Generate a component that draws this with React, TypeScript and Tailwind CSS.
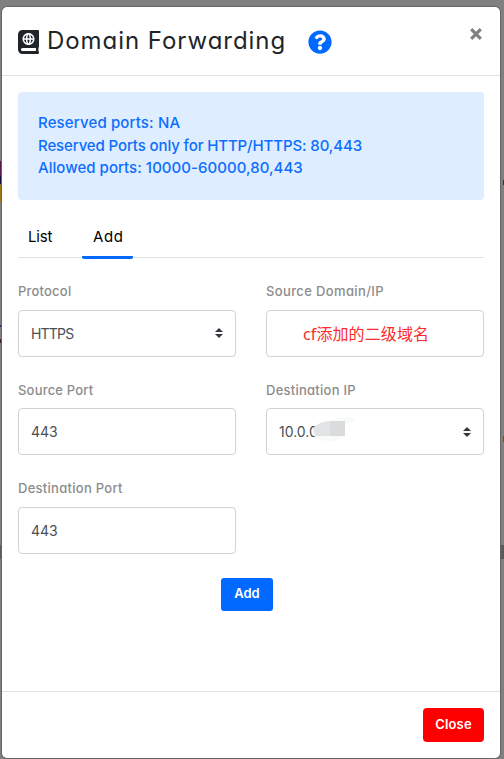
import React from 'react';
import { FaAtlas, FaQuestionCircle } from 'react-icons/fa';

function SortArrows() {
  return (
    <svg className="ml-auto h-[10px] w-2 shrink-0" viewBox="0 0 4 5" fill="#343a40">
      <path d="M2 0L0 2h4zm0 5L0 3h4z" />
    </svg>
  );
}

function Field({ label, labelClass, select, children }: {
  label: string;
  labelClass: string;
  select?: boolean;
  children?: React.ReactNode;
}) {
  return (
    <div className="h-[98.5px]">
      <div className={`h-[27.5px] text-[13px] leading-[19px] font-medium whitespace-nowrap text-[#8c8c8c] ${labelClass}`}>
        {label}
      </div>
      <div className="flex h-[47px] items-center rounded-[4px] border border-[#ced4da] pr-3 pl-3 text-[14px] text-[#495057]">
        {children}
        {select && <SortArrows />}
      </div>
    </div>
  );
}

export default function App() {
  return (
    <div className="relative h-[759px] w-[504px] overflow-hidden bg-[#808080] pt-[7px] pl-[2px] font-['Inter',sans-serif] [font-feature-settings:'cv11']">
      <div className="absolute top-[161px] left-0 h-[15px] w-[2px] bg-[#5b1649]" />
      <div className="absolute top-[176px] left-0 h-[8px] w-[2px] bg-[#10103f]" />
      <div className="absolute top-[185px] left-0 h-[17px] w-[2px] bg-[#a07414]" />
      <div className="absolute top-[325px] left-0 h-[2px] w-[2px] bg-[#203060]" />
      <div className="absolute top-[339px] left-0 h-[4px] w-[2px] bg-[#402020]" />
      <div className="absolute top-[545px] left-0 h-[14px] w-full bg-[#5a5a5a]" />
      <div className="absolute top-[180px] left-[500px] h-[6px] w-px bg-[#101050]" />
      <div className="absolute top-[180px] left-[503px] h-[5px] w-px bg-[#343034]" />
      <div className="absolute top-[435px] left-[500px] h-[10px] w-px bg-[#101050]" />
      <div className="absolute top-[436px] left-[503px] h-[6px] w-px bg-[#70502a]" />

      <div className="relative flex h-[751px] w-[498px] flex-col rounded-[5px] bg-white shadow-[0_0_0_1px_#666]">
        <header className="flex h-[69px] items-start border-b border-[#dee2e6] pr-[18px] pl-4">
          <FaAtlas className="mt-[23px] h-6 w-[21px] text-[#212529]" />
          <h1 className="mt-4 ml-2 w-[261px] text-[24px] leading-9 font-normal tracking-[0.95px] whitespace-nowrap text-[#212529]">
            Domain Forwarding
          </h1>
          <FaQuestionCircle className="mt-[23px] h-[24px] w-[24px] text-[#0069ff]" />
          <svg className="mt-[21px] ml-auto h-3 w-3" viewBox="0 0 12 12" fill="none" stroke="#808080" strokeWidth="3.2">
            <path d="M1.2 1.2L10.8 10.8M10.8 1.2L1.2 10.8" />
          </svg>
        </header>

        <main className="flex flex-1 flex-col px-4 pt-4">
          <div className="h-[108px] rounded-[4px] bg-[#deedff] p-5 text-[15px] leading-[22.5px] font-medium whitespace-nowrap text-[#0d6efd]">
            <div><span className="tracking-[0.14px]">Reserved ports: NA</span></div>
            <div><span className="tracking-[-0.12px]">Reserved Ports only for HTTP/HTTPS: 80,443</span></div>
            <div><span className="tracking-[0.04px]">Allowed ports: 10000-60000,80,443</span></div>
          </div>

          <nav className="mt-[17px] flex h-[41px] border-b border-[#dee2e6] text-[15px] leading-[40px] text-black">
            <div className="w-16 pl-[10px] tracking-[-0.2px]">List</div>
            <div className="h-[42px] w-[51px] rounded-b-[2px] border-b-[3px] border-[#0069ff] pl-[11px] tracking-[0.6px]">Add</div>
          </nav>

          <section className="mt-6 grid grid-cols-2 gap-x-[30px]">
            <Field label="Protocol" labelClass="tracking-[0.2px]" select>
              <span className="tracking-[-0.8px]">HTTPS</span>
            </Field>
            <Field label="Source Domain/IP" labelClass="tracking-[0.37px]">
              <span className="pt-[2px] pl-6 font-['Noto_Sans','Noto_Sans_CJK_SC',sans-serif] text-[16px] tracking-[0.1px] text-[#fb2c2c]">cf添加的二级域名</span>
            </Field>
            <Field label="Source Port" labelClass="tracking-[0.2px]">
              <span>443</span>
            </Field>
            <Field label="Destination IP" labelClass="tracking-[0.25px]" select>
              <span className="relative">
                10.0.0
                <svg className="absolute top-[-5px] left-[34px] h-[28px] w-[44px]" viewBox="0 0 44 28">
                  <path d="M0 13Q9 5 30 1Q38-1 43 4L32 9V20Q25 26 15 25Q6 25 0 19Z" fill="#f8fafa" />
                  <path d="M0 12Q7 5 17 5V20H2Z" fill="#e3e4e5" />
                  <path d="M17 5H32V20H17Z" fill="#dadbdc" />
                </svg>
              </span>
            </Field>
            <Field label="Destination Port" labelClass="tracking-[0.28px]">
              <span>443</span>
            </Field>
          </section>

          <button className="ml-[203px] h-[33px] w-[52px] rounded-[3px] bg-[#0069ff] text-[13px] font-semibold text-white">Add</button>
        </main>

        <footer className="flex h-[67px] justify-end border-t border-[#dee2e6] px-4 pt-4">
          <button className="h-[34px] w-[61px] rounded-[4px] bg-[#ff0000] text-[13px] font-semibold tracking-[0.2px] text-white">Close</button>
        </footer>
      </div>
    </div>
  );
}
